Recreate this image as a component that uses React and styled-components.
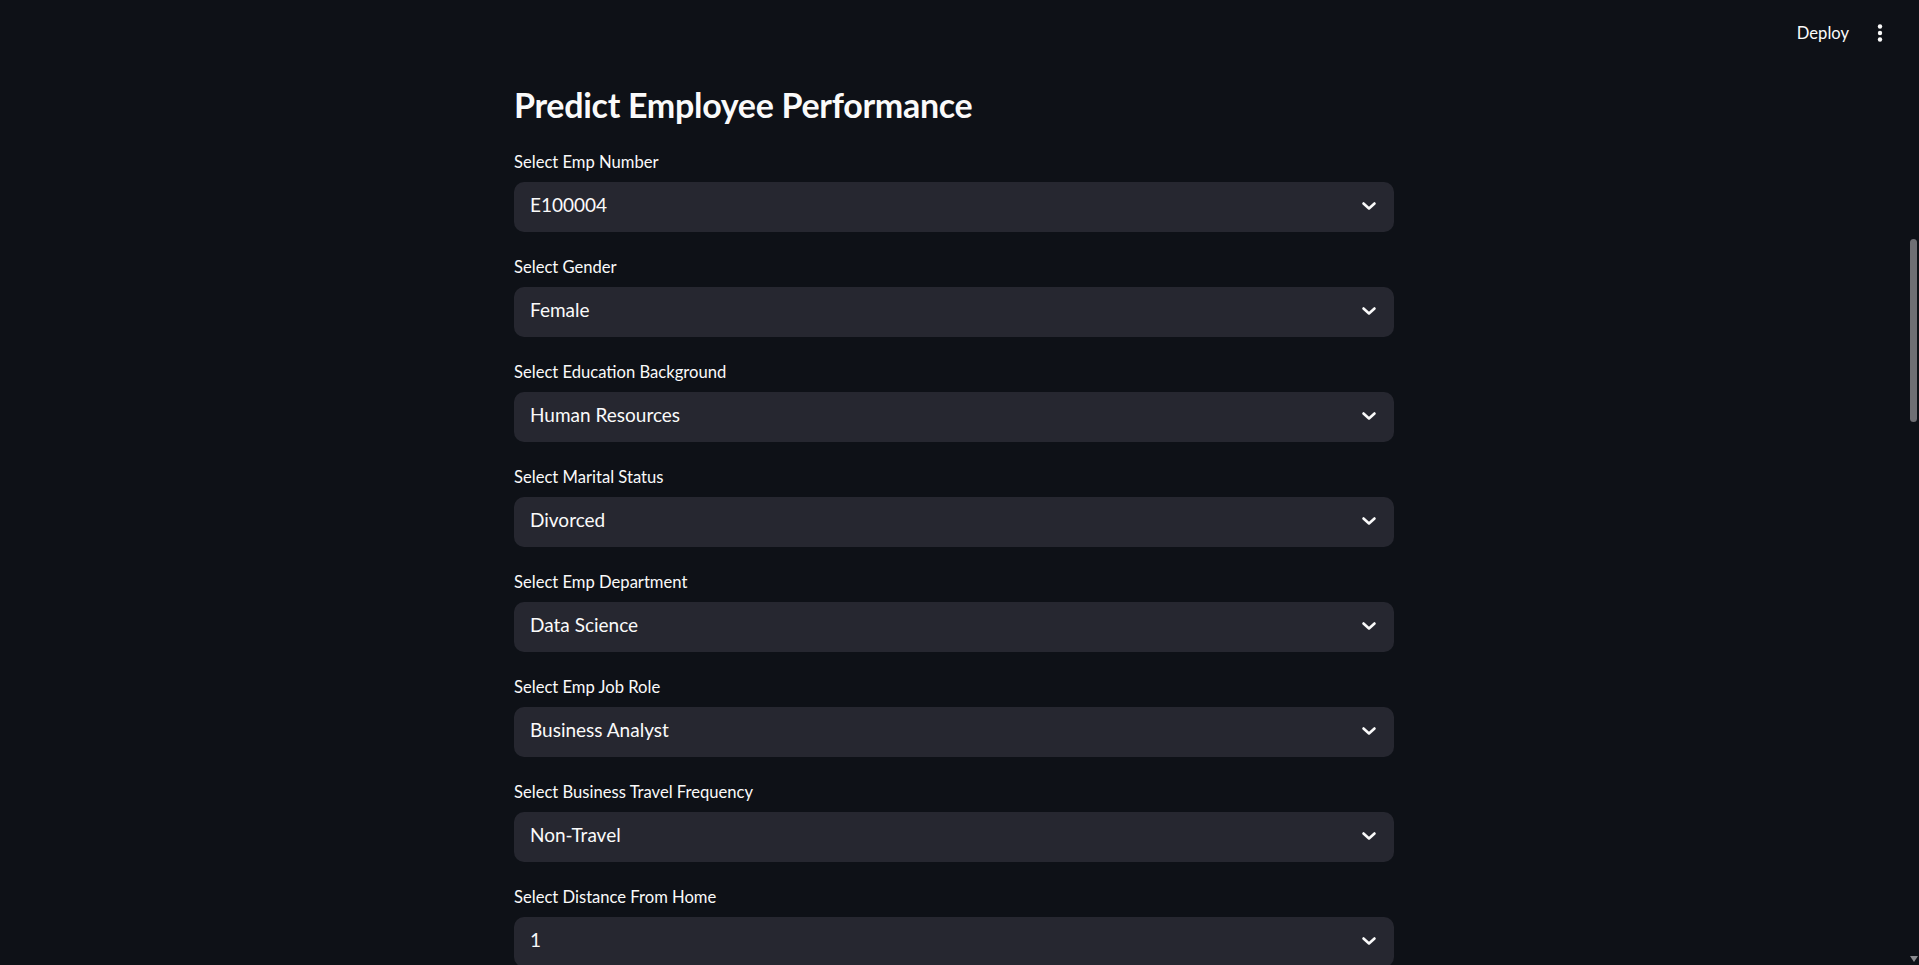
import React from "react";
import styled, { createGlobalStyle } from "styled-components";

const Global = createGlobalStyle`
  html, body {
    margin: 0;
    padding: 0;
    background: #0e1117;
    overflow: hidden;
  }
  * { box-sizing: border-box; }
`;

const Page = styled.div`
  display: flex;
  width: 100vw;
  height: 100vh;
  background: #0e1117;
  color: #fafafa;
  font-family: Lato, "Noto Sans", sans-serif;
  overflow: hidden;
`;

const Main = styled.div`
  flex: 1;
  display: flex;
  flex-direction: column;
  min-width: 0;
`;

const Header = styled.header`
  height: 64px;
  flex: none;
  display: flex;
  align-items: center;
  justify-content: flex-end;
  gap: 28px;
  padding: 2px 25px 0 0;
`;

const DeployButton = styled.button`
  background: none;
  border: none;
  color: #fafafa;
  font-family: inherit;
  font-size: 16.6px;
  padding: 0;
  cursor: pointer;
`;

const MenuButton = styled.button`
  background: none;
  border: none;
  padding: 0;
  width: 6px;
  height: 20px;
  display: flex;
  align-items: center;
  justify-content: center;
  cursor: pointer;
`;

const Column = styled.div`
  width: 880px;
  margin: 0 auto;
  padding-top: 20px;
  display: flex;
  flex-direction: column;
  gap: 20px;
`;

const Title = styled.h3`
  margin: 0 0 1px 0;
  font-size: 34px;
  font-weight: 700;
  line-height: 42px;
  letter-spacing: -0.3px;
`;

const Field = styled.div`
  display: flex;
  flex-direction: column;
`;

const Label = styled.label`
  font-size: 16.6px;
  line-height: 30px;
  margin-bottom: 5px;
`;

const Select = styled.div`
  height: 50px;
  border-radius: 10px;
  background: #262730;
  display: flex;
  align-items: center;
  justify-content: space-between;
  padding: 0 13px 4px 16px;
  font-size: 19px;
  line-height: 24px;
`;

const Chevron = styled.svg`
  width: 24px;
  height: 24px;
  flex: none;
  margin-top: 2px;
`;

const Track = styled.div`
  width: 11px;
  flex: none;
  position: relative;
  display: flex;
  flex-direction: column;
  align-items: center;
  padding-top: 239px;
`;

const Thumb = styled.div`
  width: 7px;
  height: 183px;
  border-radius: 4px;
  background: #6f6f74;
`;

const DownArrow = styled.div`
  position: absolute;
  bottom: 3px;
  left: 2px;
  width: 0;
  height: 0;
  border-left: 4px solid transparent;
  border-right: 4px solid transparent;
  border-top: 6px solid #8b8b8f;
`;

const fields = [
  ["Select Emp Number", "E100004"],
  ["Select Gender", "Female"],
  ["Select Education Background", "Human Resources"],
  ["Select Marital Status", "Divorced"],
  ["Select Emp Department", "Data Science"],
  ["Select Emp Job Role", "Business Analyst"],
  ["Select Business Travel Frequency", "Non-Travel"],
  ["Select Distance From Home", "1"],
];

export default function App() {
  return (
    <>
      <Global />
      <Page>
        <Main>
          <Header>
            <DeployButton>Deploy</DeployButton>
            <MenuButton aria-label="menu">
              <svg width="6" height="20" viewBox="0 0 6 20">
                <circle cx="3" cy="3.5" r="2.2" fill="#fafafa" />
                <circle cx="3" cy="10" r="2.2" fill="#fafafa" />
                <circle cx="3" cy="16.5" r="2.2" fill="#fafafa" />
              </svg>
            </MenuButton>
          </Header>
          <Column>
            <Title>Predict Employee Performance</Title>
            {fields.map(([label, value]) => (
              <Field key={label}>
                <Label>{label}</Label>
                <Select>
                  <span>{value}</span>
                  <Chevron viewBox="0 0 24 24">
                    <polyline
                      points="6.5,9.5 12,14.5 17.5,9.5"
                      fill="none"
                      stroke="#fafafa"
                      strokeWidth="2.6"
                      strokeLinecap="round"
                      strokeLinejoin="round"
                    />
                  </Chevron>
                </Select>
              </Field>
            ))}
          </Column>
        </Main>
        <Track>
          <Thumb />
          <DownArrow />
        </Track>
      </Page>
    </>
  );
}
